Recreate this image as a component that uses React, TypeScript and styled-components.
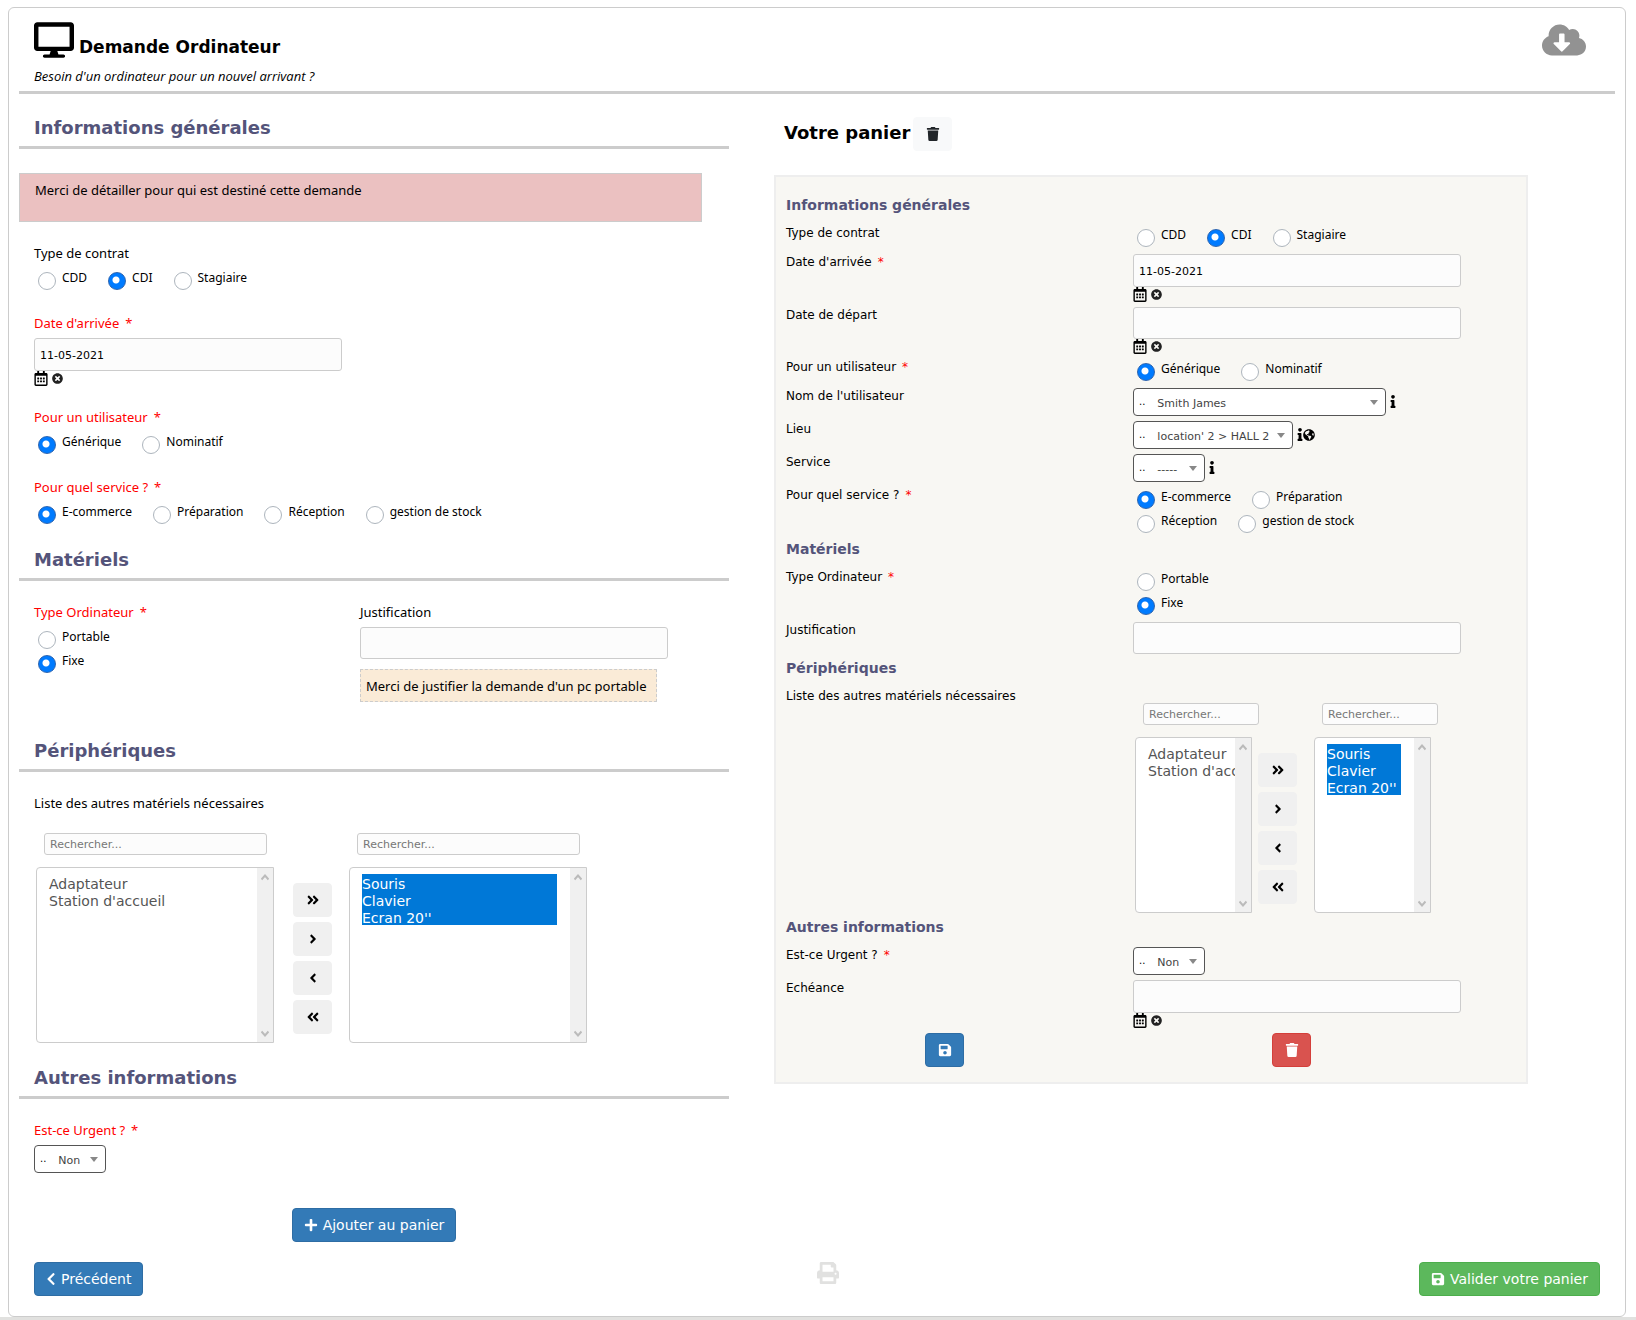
import React, { useId, useState } from 'react';
import styled, { createGlobalStyle } from 'styled-components';
import {
  FaAngleDoubleLeft,
  FaAngleDoubleRight,
  FaAngleLeft,
  FaAngleRight,
  FaChevronLeft,
  FaCloudDownloadAlt,
  FaDesktop,
  FaGlobeAmericas,
  FaInfo,
  FaPlus,
  FaPrint,
  FaRegCalendarAlt,
  FaSave,
  FaTimesCircle,
  FaTrash,
} from 'react-icons/fa';

const wide = "Verdana, 'DejaVu Sans', sans-serif";
const humanist = "'Segoe UI', 'Noto Sans', sans-serif";

const GlobalStyle = createGlobalStyle`
  *, *::before, *::after { box-sizing: border-box; }
  body { margin: 0; background: #fff; color: #000; font: 13px/20px ${humanist}; }
  h1, h2, h3, p { margin: 0; }
  button, input, select { font-family: ${wide}; }
`;

const Card = styled.main`
  margin: 7px 10px 0 8px;
  padding: 14px 10px 20px;
  border: 1px solid #ccc;
  border-radius: 6px;
`;

const PageEdge = styled.footer`
  height: 3px;
  background: #e1e1df;
`;

const Header = styled.header`
  display: flex;
  justify-content: space-between;
  align-items: flex-start;
  padding: 0 29px 5px 15px;
  border-bottom: 3px solid #ccc;
`;

const TitleLine = styled.div`
  display: flex;
  align-items: flex-end;
  gap: 5px;
`;

const Title = styled.h1`
  font: bold 17px/22px ${wide};
`;

const Subtitle = styled.p`
  margin-top: 8px;
  font: italic 13px/20px 'Open Sans', sans-serif;
`;

const IconButton = styled.button<{ $color?: string }>`
  display: inline-flex;
  padding: 0;
  border: 0;
  background: none;
  color: ${(p) => p.$color ?? '#000'};
  cursor: pointer;
`;

const Columns = styled.div`
  display: grid;
  grid-template-columns: minmax(0, 710fr) minmax(0, 754fr) minmax(0, 42fr);
  column-gap: 45px;
  padding-top: 21px;
`;

const FormColumn = styled.div`
  display: flex;
  flex-direction: column;
  gap: 21px;
`;

const SectionTitle = styled.h2`
  padding: 0 15px 6px;
  border-bottom: 3px solid #ccc;
  color: #54547a;
  font: bold 18px/25px ${wide};
`;

const Notice = styled.p`
  min-height: 49px;
  margin: 3px 27px 0 0;
  padding: 6px 15px;
  border: 1px solid #ccc;
  background: #ebc1c1;
`;

const Fields = styled.div<{ $split?: boolean }>`
  display: grid;
  grid-template-columns: ${(p) => (p.$split ? '326px 1fr' : '1fr')};
  padding: 0 15px;
`;

const Field = styled.div<{ $after: number }>`
  display: flex;
  flex-direction: column;
  align-items: flex-start;
  gap: 5px;
  margin-bottom: ${(p) => p.$after}px;
`;

const FieldLabel = styled.label<{ $required?: boolean }>`
  color: ${(p) => (p.$required ? '#f00' : '#000')};
`;

const Star = styled.span`
  margin-left: 6px;
  color: #f00;
`;

const Hint = styled.p`
  margin-top: 5px;
  padding: 6px 9px 5px 5px;
  border: 1px dashed #ccc;
  background: #faebd7;
`;

const TextInput = styled.input<{ $tall?: boolean; $width: number }>`
  display: block;
  width: ${(p) => p.$width}px;
  max-width: 100%;
  height: ${(p) => (p.$tall ? 33 : 32)}px;
  padding: 2px 5px 0;
  border: 1px solid #ccc;
  border-radius: 3px;
  background: #fcfcfc;
  color: #000;
  font-size: 11px;
`;

const DateTools = styled.div`
  display: flex;
  align-items: center;
  gap: 4px;
  height: 15px;
`;

const RadioList = styled.div<{ $stacked?: boolean }>`
  display: flex;
  flex-wrap: wrap;
  flex-direction: ${(p) => (p.$stacked ? 'column' : 'row')};
  column-gap: 17px;
`;

const RadioLabel = styled.label`
  display: flex;
  gap: 6px;
  height: 24px;
  padding-left: 4px;
  font: 12px/20px ${humanist};
`;

const RadioInput = styled.input`
  appearance: none;
  width: 18px;
  height: 18px;
  margin: 4px 0 0;
  border: 1px solid #adb5bd;
  border-radius: 50%;
  background: #fff;
  &:checked {
    border-color: #2a63b0;
    background: radial-gradient(circle at 7px 7px, #fff 3px, #007bff 4px);
  }
`;

const SelectShell = styled.div<{ $width: number }>`
  display: flex;
  align-items: center;
  width: ${(p) => p.$width}px;
  height: 28px;
  padding: 0 7px 0 5px;
  border: 1px solid #555;
  border-radius: 4px;
  background: #fff;
  font: 10px/12px ${wide};
`;

const NativeSelect = styled.select`
  appearance: none;
  flex: 1;
  min-width: 0;
  margin-left: 12px;
  padding: 4px 0 0;
  border: 0;
  background: none;
  color: #444;
  font-size: 11px;
  line-height: 16px;
`;

const SelectLine = styled.div`
  display: flex;
  align-items: flex-start;
  gap: 4px;
`;

const InfoIcons = styled.div`
  display: flex;
  align-items: center;
  padding-top: 7px;
`;

const Dual = styled.div<{ $gap: number }>`
  display: flex;
  padding: 15px 0 0 2px;
  gap: 17px;
  > :first-child { margin-right: ${(p) => p.$gap - 17}px; }
`;

const DualSide = styled.div<{ $width: number }>`
  display: flex;
  flex-direction: column;
  gap: 12px;
  width: ${(p) => p.$width}px;
`;

const SearchInput = styled.input<{ $width: number }>`
  flex: none;
  width: ${(p) => p.$width}px;
  height: 22px;
  margin-left: 8px;
  padding: 0 5px;
  border: 1px solid #ccc;
  border-radius: 3px;
  background: #fcfcfc;
  font-size: 11px;
  &::placeholder { color: #777; }
`;

const ListFrame = styled.div`
  display: flex;
  height: 176px;
  border: 1px solid #ccc;
  border-radius: 4px 0 0 4px;
  background: #fff;
  overflow: hidden;
`;

const ListSelect = styled.select`
  flex: 1;
  min-width: 0;
  height: 174px;
  padding: 6px 0 6px 12px;
  border: 0;
  outline: 0;
  background: none;
  overflow: hidden;
  scrollbar-width: none;
  color: #555;
  font-size: 14px;
`;

const ListOption = styled.option<{ $inset: boolean }>`
  height: 17px;
  min-height: 17px;
  margin-right: ${(p) => (p.$inset ? 13 : 0)}px;
  padding: 2px 0 0;
  line-height: 15px;
  &:checked {
    background: linear-gradient(#0078d7, #0078d7);
    -webkit-text-fill-color: #fff;
  }
`;

const Rail = styled.div`
  display: flex;
  flex: none;
  flex-direction: column;
  justify-content: space-between;
  align-items: center;
  width: 16px;
  padding: 6px 0 5px;
  background: #f0f0f0;
`;

const Movers = styled.div`
  display: flex;
  flex-direction: column;
  gap: 5px;
  padding-top: 50px;
`;

const tones = {
  plain: ['#f0f0f0', '#f0f0f0', '#000'],
  light: ['#f8f9fa', '#f8f9fa', '#212529'],
  primary: ['#337ab7', '#2e6da4', '#fff'],
  success: ['#5cb85c', '#4cae4c', '#fff'],
  danger: ['#d9534f', '#d43f3a', '#fff'],
};

const Button = styled.button<{ $tone: keyof typeof tones }>`
  display: inline-flex;
  align-items: center;
  justify-content: center;
  gap: 5px;
  min-width: 39px;
  height: 34px;
  padding: 0 11px;
  border: 1px solid ${(p) => tones[p.$tone][1]};
  border-radius: 4px;
  background: ${(p) => tones[p.$tone][0]};
  color: ${(p) => tones[p.$tone][2]};
  font-size: 14px;
  white-space: nowrap;
  cursor: pointer;
  svg { flex: none; }
`;

const AddLine = styled.div`
  display: flex;
  justify-content: center;
  padding: 14px 0 20px;
`;

const CartHeader = styled.div`
  display: flex;
  align-items: flex-start;
  gap: 3px;
  padding: 2px 10px 24px;
`;

const CartTitle = styled.h2`
  font: bold 18px/32px ${wide};
`;

const CartPanel = styled.section`
  display: flex;
  flex-direction: column;
  gap: 5px;
  padding: 19px 10px 15px;
  border: 2px solid #eee;
  background: #f8f7f3;
`;

const CartSection = styled.h3`
  padding-bottom: 6px;
  color: #54547a;
  font: bold 14px/18px ${wide};
`;

const CartRow = styled.div`
  display: grid;
  grid-template-columns: minmax(0, 347fr) minmax(0, 383fr);
`;

const CartLabel = styled.label`
  font: 12px/16px ${wide};
`;

const CartRadios = styled.div`
  max-width: 260px;
`;

const CartActions = styled.div`
  display: grid;
  grid-template-columns: minmax(0, 347fr) minmax(0, 347fr) minmax(0, 36fr);
`;

const ActionCell = styled.div`
  display: flex;
  justify-content: center;
  padding-right: 30px;
`;

const BottomBar = styled.div`
  display: flex;
  align-items: flex-start;
  padding: 0 15px;
`;

const BottomHalf = styled.div`
  display: flex;
  flex: 1;
  align-items: flex-start;
  justify-content: space-between;
`;

function Radios({ options, initial, stacked, labelledBy }: { options: string[]; initial: string; stacked?: boolean; labelledBy: string }) {
  const name = useId();
  const [value, setValue] = useState(initial);
  return (
    <RadioList role="radiogroup" aria-labelledby={labelledBy} $stacked={stacked}>
      {options.map((o) => (
        <RadioLabel key={o}>
          <RadioInput type="radio" name={name} checked={value === o} onChange={() => setValue(o)} />
          {o}
        </RadioLabel>
      ))}
    </RadioList>
  );
}

const CalendarIcon = styled(FaRegCalendarAlt)`
  width: 14px;
  height: 15px;
`;

const InfoIcon = styled(FaInfo)`
  width: 6px;
  height: 13px;
`;

const BackIcon = styled(FaChevronLeft)`
  width: 10px;
  height: 14px;
`;

const ComputerIcon = styled(FaDesktop)`
  width: 40px;
  height: 36px;
`;

const CloudIcon = styled(FaCloudDownloadAlt)`
  width: 44px;
  height: 36px;
`;

function DateField({ id, value = '', width, tall }: { id: string; value?: string; width: number; tall?: boolean }) {
  const [date, setDate] = useState(value);
  return (
    <div>
      <TextInput id={id} $width={width} $tall={tall} value={date} onChange={(e) => setDate(e.target.value)} />
      <DateTools>
        <IconButton type="button" aria-label="Calendrier">
          <CalendarIcon />
        </IconButton>
        <IconButton type="button" aria-label="Effacer" $color="#222" onClick={() => setDate('')}>
          <FaTimesCircle size={11} />
        </IconButton>
      </DateTools>
    </div>
  );
}

function Select({ id, value, width }: { id: string; value: string; width: number }) {
  return (
    <SelectShell $width={width}>
      <span>..</span>
      <NativeSelect id={id} defaultValue={value}>
        <option>{value}</option>
      </NativeSelect>
      <svg width="8" height="5" viewBox="0 0 8 5" aria-hidden="true">
        <path d="M0 0h8L4 5z" fill="#888" />
      </svg>
    </SelectShell>
  );
}

function ListBox({ id, label, items, selected, inset }: { id?: string; label: string; items: string[]; selected?: boolean; inset: boolean }) {
  return (
    <ListFrame>
      <ListSelect id={id} aria-label={label} multiple size={4} defaultValue={selected ? items : []}>
        {items.map((i) => (
          <ListOption key={i} $inset={inset}>{i}</ListOption>
        ))}
      </ListSelect>
      <Rail aria-hidden="true">
        <svg width="8" height="7" viewBox="0 0 8 7" fill="none" stroke="#bbb" strokeWidth="2"><path d="M0.500 5.500L4 1.500l3.500 4" /></svg>
        <svg width="8" height="7" viewBox="0 0 8 7" fill="none" stroke="#bbb" strokeWidth="2"><path d="M0.500 1.500L4 5.500l3.500-4" /></svg>
      </Rail>
    </ListFrame>
  );
}

function DualList({ id, list, search, gap }: { id: string; list: number; search: number; gap: number }) {
  return (
    <Dual $gap={gap}>
      <DualSide $width={list}>
        <SearchInput $width={search} placeholder="Rechercher..." aria-label="Rechercher dans la liste" />
        <ListBox id={id} label="Matériels disponibles" items={['Adaptateur', "Station d'accueil"]} inset={false} />
      </DualSide>
      <Movers>
        <Button type="button" $tone="plain" aria-label="Tout ajouter"><FaAngleDoubleRight size={14} /></Button>
        <Button type="button" $tone="plain" aria-label="Ajouter"><FaAngleRight size={14} /></Button>
        <Button type="button" $tone="plain" aria-label="Retirer"><FaAngleLeft size={14} /></Button>
        <Button type="button" $tone="plain" aria-label="Tout retirer"><FaAngleDoubleLeft size={14} /></Button>
      </Movers>
      <DualSide $width={list}>
        <SearchInput $width={search} placeholder="Rechercher..." aria-label="Rechercher dans la sélection" />
        <ListBox label="Matériels choisis" items={['Souris', 'Clavier', "Ecran 20''"]} selected inset />
      </DualSide>
    </Dual>
  );
}

function FormField({ id, label, required, group, after = 0, children }: { id: string; label: string; required?: boolean; group?: boolean; after?: number; children: React.ReactNode }) {
  return (
    <Field $after={after}>
      <FieldLabel as={group ? 'span' : 'label'} id={`${id}-label`} htmlFor={group ? undefined : id} $required={required}>
        {label}
        {required && <Star>*</Star>}
      </FieldLabel>
      {children}
    </Field>
  );
}

function CartField({ id, label, required, group, children }: { id: string; label: string; required?: boolean; group?: boolean; children: React.ReactNode }) {
  return (
    <CartRow>
      <CartLabel as={group ? 'span' : 'label'} id={`${id}-label`} htmlFor={group ? undefined : id}>
        {label}
        {required && <Star>*</Star>}
      </CartLabel>
      {children}
    </CartRow>
  );
}

const contracts = ['CDD', 'CDI', 'Stagiaire'];
const users = ['Générique', 'Nominatif'];
const services = ['E-commerce', 'Préparation', 'Réception', 'gestion de stock'];
const computers = ['Portable', 'Fixe'];

export default function App() {
  return (
    <>
      <GlobalStyle />
      <Card>
        <Header>
          <div>
            <TitleLine>
              <ComputerIcon />
              <Title>Demande Ordinateur</Title>
            </TitleLine>
            <Subtitle>Besoin d'un ordinateur pour un nouvel arrivant ?</Subtitle>
          </div>
          <IconButton type="button" aria-label="Télécharger" $color="#929292">
            <CloudIcon />
          </IconButton>
        </Header>

        <Columns>
          <FormColumn>
            <SectionTitle>Informations générales</SectionTitle>
            <Notice>Merci de détailler pour qui est destiné cette demande</Notice>
            <Fields>
              <FormField id="contract" label="Type de contrat" group>
                <Radios options={contracts} initial="CDI" labelledBy="contract-label" />
              </FormField>
            </Fields>
            <Fields>
              <FormField id="arrival" label="Date d'arrivée" required>
                <DateField id="arrival" value="11-05-2021" width={308} tall />
              </FormField>
            </Fields>
            <Fields>
              <FormField id="user" label="Pour un utilisateur" required group>
                <Radios options={users} initial="Générique" labelledBy="user-label" />
              </FormField>
            </Fields>
            <Fields>
              <FormField id="service" label="Pour quel service ?" required group>
                <Radios options={services} initial="E-commerce" labelledBy="service-label" />
              </FormField>
            </Fields>

            <SectionTitle>Matériels</SectionTitle>
            <Fields $split>
              <FormField id="computer" label="Type Ordinateur" required group>
                <Radios options={computers} initial="Fixe" stacked labelledBy="computer-label" />
              </FormField>
              <FormField id="reason" label="Justification" after={15}>
                <TextInput id="reason" $width={308} />
                <Hint>Merci de justifier la demande d'un pc portable</Hint>
              </FormField>
            </Fields>

            <SectionTitle>Périphériques</SectionTitle>
            <Fields>
              <FormField id="devices" label="Liste des autres matériels nécessaires" after={1}>
                <DualList id="devices" list={238} search={223} gap={19} />
              </FormField>
            </Fields>

            <SectionTitle>Autres informations</SectionTitle>
            <Fields>
              <FormField id="urgent" label="Est-ce Urgent ?" required>
                <Select id="urgent" value="Non" width={72} />
              </FormField>
            </Fields>
            <AddLine>
              <Button type="button" $tone="primary"><FaPlus size={14} />Ajouter au panier</Button>
            </AddLine>
          </FormColumn>

          <div>
            <CartHeader>
              <CartTitle>Votre panier</CartTitle>
              <Button type="button" $tone="light" aria-label="Vider le panier"><FaTrash size={14} /></Button>
            </CartHeader>
            <CartPanel>
              <CartSection>Informations générales</CartSection>
              <CartField id="c-contract" label="Type de contrat" group>
                <Radios options={contracts} initial="CDI" labelledBy="c-contract-label" />
              </CartField>
              <CartField id="c-arrival" label="Date d'arrivée" required>
                <DateField id="c-arrival" value="11-05-2021" width={328} tall />
              </CartField>
              <CartField id="c-leave" label="Date de départ">
                <DateField id="c-leave" width={328} />
              </CartField>
              <CartField id="c-user" label="Pour un utilisateur" required group>
                <Radios options={users} initial="Générique" labelledBy="c-user-label" />
              </CartField>
              <CartField id="c-name" label="Nom de l'utilisateur">
                <SelectLine>
                  <Select id="c-name" value="Smith James" width={253} />
                  <InfoIcons><InfoIcon /></InfoIcons>
                </SelectLine>
              </CartField>
              <CartField id="c-place" label="Lieu">
                <SelectLine>
                  <Select id="c-place" value="location' 2 > HALL 2" width={160} />
                  <InfoIcons>
                    <InfoIcon />
                    <FaGlobeAmericas size={12} />
                  </InfoIcons>
                </SelectLine>
              </CartField>
              <CartField id="c-dept" label="Service">
                <SelectLine>
                  <Select id="c-dept" value="-----" width={72} />
                  <InfoIcons><InfoIcon /></InfoIcons>
                </SelectLine>
              </CartField>
              <CartField id="c-service" label="Pour quel service ?" required group>
                <CartRadios>
                  <Radios options={services} initial="E-commerce" labelledBy="c-service-label" />
                </CartRadios>
              </CartField>

              <CartSection>Matériels</CartSection>
              <CartField id="c-computer" label="Type Ordinateur" required group>
                <Radios options={computers} initial="Fixe" stacked labelledBy="c-computer-label" />
              </CartField>
              <CartField id="c-reason" label="Justification">
                <TextInput id="c-reason" $width={328} />
              </CartField>

              <CartSection>Périphériques</CartSection>
              <CartField id="c-devices" label="Liste des autres matériels nécessaires">
                <DualList id="c-devices" list={117} search={116} gap={6} />
              </CartField>

              <CartSection>Autres informations</CartSection>
              <CartField id="c-urgent" label="Est-ce Urgent ?" required>
                <Select id="c-urgent" value="Non" width={72} />
              </CartField>
              <CartField id="c-due" label="Echéance">
                <DateField id="c-due" width={328} tall />
              </CartField>
              <CartActions>
                <ActionCell>
                  <Button type="button" $tone="primary" aria-label="Enregistrer"><FaSave size={14} /></Button>
                </ActionCell>
                <ActionCell>
                  <Button type="button" $tone="danger" aria-label="Supprimer"><FaTrash size={14} /></Button>
                </ActionCell>
              </CartActions>
            </CartPanel>
          </div>
        </Columns>

        <BottomBar>
          <BottomHalf>
            <Button type="button" $tone="primary"><BackIcon />Précédent</Button>
          </BottomHalf>
          <BottomHalf>
            <IconButton type="button" aria-label="Imprimer" $color="#e1e1e0"><FaPrint size={22} /></IconButton>
            <Button type="button" $tone="success"><FaSave size={14} />Valider votre panier</Button>
          </BottomHalf>
        </BottomBar>
      </Card>
      <PageEdge />
    </>
  );
}
